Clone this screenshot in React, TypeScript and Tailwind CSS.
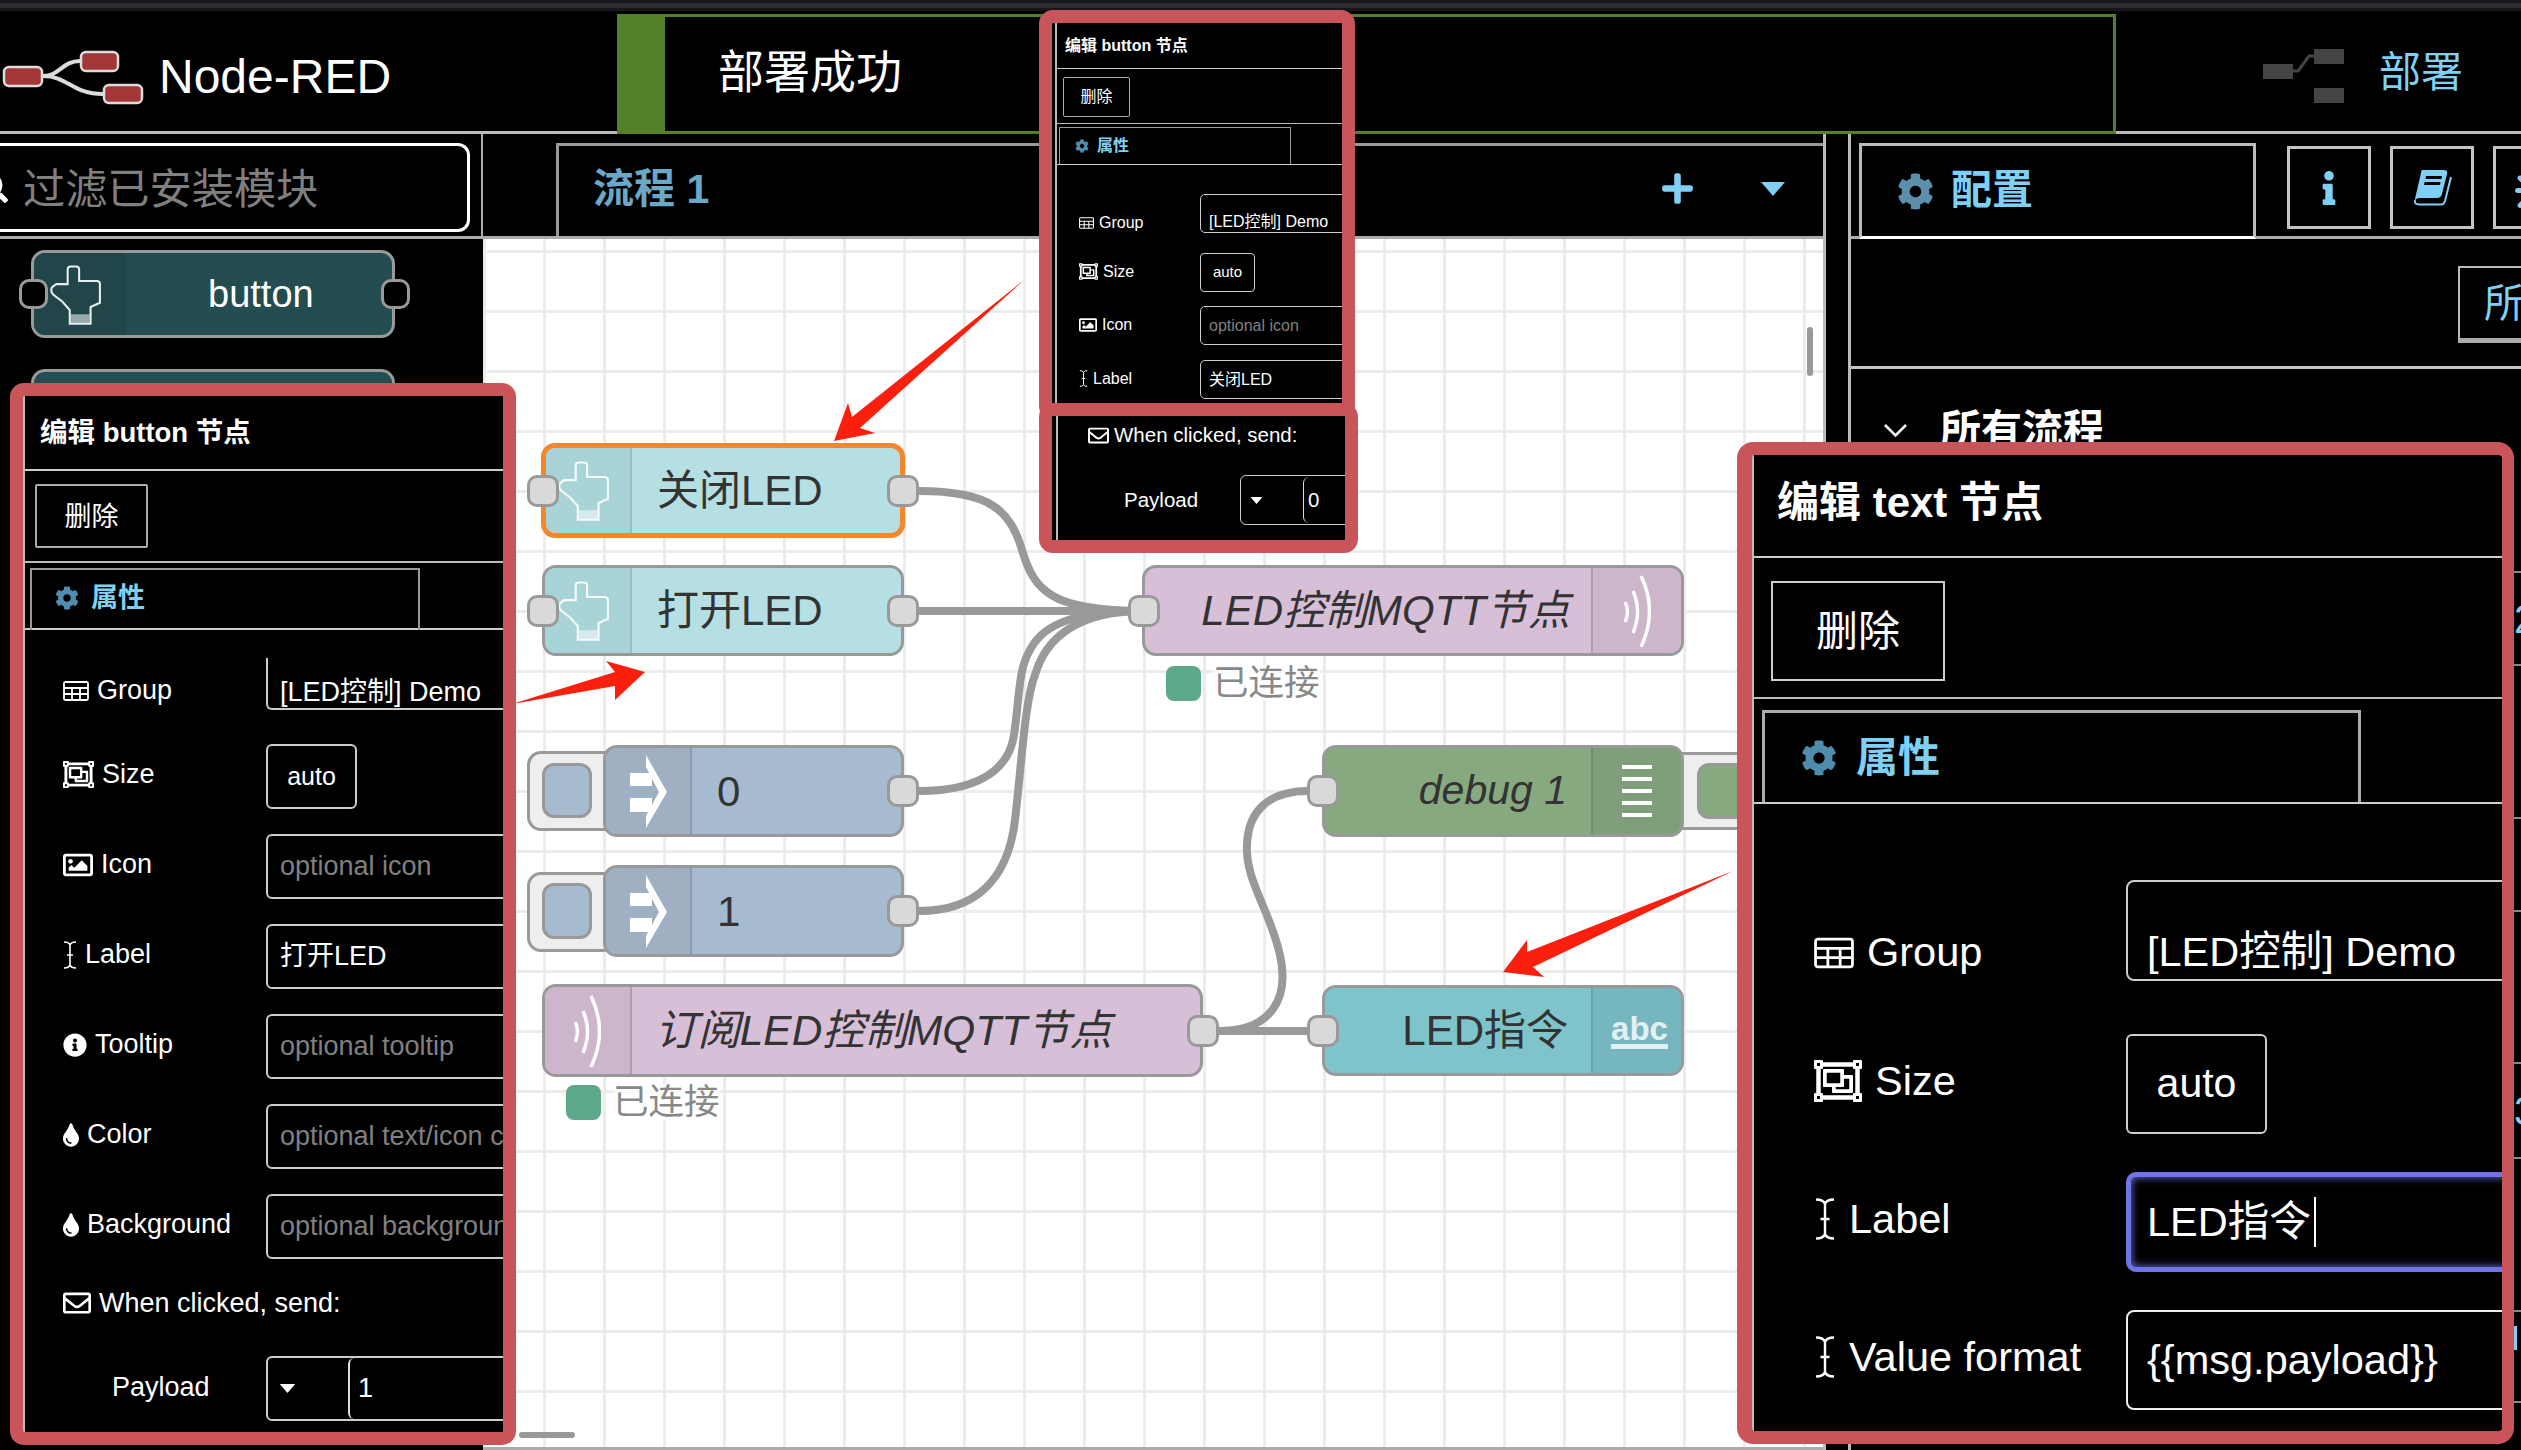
import type { ReactNode } from "react";
import {
  FaBug,
  FaCog,
  FaInfo,
  FaInfoCircle,
  FaPlus,
  FaRegEnvelope,
  FaRegImage,
  FaRegObjectGroup,
  FaSearch,
  FaTint,
} from "react-icons/fa";

function Port({ className }: { className: string }) {
  return (
    <div
      className={
        "absolute top-1/2 size-8 -translate-y-1/2 rounded-[10px] border-[3px] border-[#999] bg-[#d9d9d9] " + className
      }
    />
  );
}

function HandIcon() {
  return (
    <svg viewBox="31 21 50 58" className="-ml-[8px] h-[61px] w-[52px]" fill="none" stroke="#fff" strokeWidth="2" opacity="0.9">
      <path d="M48 26 Q48 23 51 23 H56 Q59 23 59 26 V37 H76 Q79 37 79 40 V58 L70 62 V78 H50 V65 L43 57 L34 50 Q31 46 33 43 L37 40 H48Z" />
      <path d="M51 69 H69 V77 H51Z" fill="#fff" opacity="0.6" stroke="none" />
    </svg>
  );
}

function InjectIcon() {
  return (
    <svg viewBox="0 0 37 73" className="h-[73px] w-[37px]" fill="#fff">
      <rect x="0" y="18" width="22" height="13" />
      <rect x="0" y="43" width="22" height="14" />
      <path d="M16 0 L37 37 L16 73 V61 L29 37 L16 12Z" />
    </svg>
  );
}

function WaveIcon() {
  return (
    <svg viewBox="0 0 27 72" className="h-[72px] w-[27px]" fill="none" stroke="#fff" strokeWidth="3.5">
      <path d="M1 27 Q6 36 1 47" />
      <path d="M9 16 Q18 36 9 58" />
      <path d="M17 1 Q34 36 17 72" />
    </svg>
  );
}

function TableIcon({ className }: { className: string }) {
  return (
    <svg viewBox="0 0 26 20" className={className} fill="none" stroke="currentColor" strokeWidth="1.8">
      <rect x="1" y="1" width="24" height="18" rx="1.5" />
      <path d="M1 7 H25 M1 13 H25 M9 7 V19 M17 7 V19" />
    </svg>
  );
}

function CursorIcon({ className }: { className: string }) {
  return (
    <svg viewBox="0 0 14 28" className={className} fill="none" stroke="currentColor" strokeWidth="1.6">
      <path d="M1 1 Q6 1 7 4 Q8 1 13 1 M7 4 V24 M1 27 Q6 27 7 24 Q8 27 13 27 M4 14 H10" />
    </svg>
  );
}

function Triangle({ className }: { className: string }) {
  return (
    <svg viewBox="0 0 24 14" className={className} fill="currentColor">
      <path d="M0 0 H24 L12 14Z" />
    </svg>
  );
}

function BookIcon() {
  return (
    <svg viewBox="0 0 39 37" className="h-[37px] w-[39px]" fill="#7fd0f5">
      <path d="M9 1 H31 Q35 1 34 5 L29 25 Q28 29 24 29 H7 Q3 29 1.5 32 L8 4 Q8.5 1 9 1Z" />
      <path d="M2 31 Q1 35.5 6 35.5 H28 Q31 35.5 32 32 L38 8" fill="none" stroke="#7fd0f5" strokeWidth="2" />
      <path d="M13 7 H29 L28.5 10 H12.5Z M11.5 13 H27.5 L27 16 H11Z" fill="#000" />
    </svg>
  );
}

function FlowNode({
  box,
  body,
  section,
  text,
  icon,
  label,
  iconRight,
  ports,
}: {
  box: string;
  body: string;
  section: string;
  text: string;
  icon: ReactNode;
  label: ReactNode;
  iconRight?: boolean;
  ports: ReactNode;
}) {
  const iconPart = <div className={"flex shrink-0 items-center justify-center " + section}>{icon}</div>;
  return (
    <div className={"absolute " + box}>
      <div className={"flex h-full overflow-hidden rounded-[14px] " + body}>
        {!iconRight && iconPart}
        <div className={"flex min-w-0 flex-1 items-center whitespace-nowrap text-[#333] " + text}>{label}</div>
        {iconRight && iconPart}
      </div>
      {ports}
    </div>
  );
}

function Status({ className }: { className: string }) {
  return (
    <div className={"absolute flex items-center gap-[12px] " + className}>
      <div className="size-[35px] rounded-[8px] bg-[#5ba88a]" />
      <span className="bg-white/70 text-[35.5px] leading-[36px] text-[#888]">已连接</span>
    </div>
  );
}

function InjectButton({ className, inner }: { className: string; inner: string }) {
  return (
    <div className={"absolute rounded-[14px] border-[3px] border-[#999] bg-[#eee] " + className}>
      <div className={"absolute rounded-[12px] border-[3px] border-[#999] " + inner} />
    </div>
  );
}

function Canvas() {
  return (
    <div className="relative h-[1208px] overflow-hidden bg-white bg-[linear-gradient(#ececec_3px,transparent_3px),linear-gradient(90deg,#ececec_3px,transparent_3px)] bg-[size:60px_60px] bg-[position:0_11px]">
      <svg viewBox="483 239 1340 1208" className="absolute inset-0 h-[1208px] w-[1340px]" fill="none" stroke="#999" strokeWidth="8">
        <path d="M919 491 C990 491 1010 510 1022 550 C1034 590 1050 611 1143 611" />
        <path d="M919 611 H1143" />
        <path d="M919 791 C970 791 1008 775 1014 735 C1020 695 1018 670 1030 650 C1045 620 1085 611 1143 611" />
        <path d="M919 911 C975 911 1008 880 1015 820 C1022 760 1025 700 1035 675 C1045 640 1075 611 1143 611" />
        <path d="M1219 1031 C1270 1031 1290 1000 1280 955 C1270 910 1245 880 1247 845 C1248 810 1270 791 1308 791" />
        <path d="M1219 1031 H1308" />
      </svg>

      <FlowNode
        box="left-[58px] top-[204px] h-[95px] w-[364px]"
        body="border-[5px] border-[#f5862e] bg-[#b5dfe2]"
        section="w-[86px] border-r-2 border-[#98bfc3] bg-[#a8d3d7]"
        text="pl-[25px] text-[42px]"
        icon={<HandIcon />}
        label="关闭LED"
        ports={
          <>
            <Port className="-left-[14px]" />
            <Port className="-right-[14px]" />
          </>
        }
      />
      <FlowNode
        box="left-[59px] top-[326px] h-[91px] w-[362px]"
        body="border-[3px] border-[#999] bg-[#b5dfe2]"
        section="w-[87px] border-r-2 border-[#98bfc3] bg-[#a8d3d7]"
        text="pl-[25px] text-[42px]"
        icon={<HandIcon />}
        label="打开LED"
        ports={
          <>
            <Port className="-left-[15px]" />
            <Port className="-right-[15px]" />
          </>
        }
      />

      <InjectButton className="left-[44px] top-[512px] h-[80px] w-[90px]" inner="left-[12px] top-[9px] h-[55px] w-[50px] bg-[#a6bbcf]" />
      <FlowNode
        box="left-[120px] top-[506px] h-[92px] w-[301px]"
        body="border-[3px] border-[#999] bg-[#a6bbcf]"
        section="w-[86px] border-r-2 border-[#8a9cae] bg-[#9eb0c2]"
        text="pl-[25px] text-[42px]"
        icon={<InjectIcon />}
        label="0"
        ports={<Port className="-right-[15px]" />}
      />
      <InjectButton className="left-[44px] top-[633px] h-[80px] w-[90px]" inner="left-[12px] top-[8px] h-[56px] w-[50px] bg-[#a6bbcf]" />
      <FlowNode
        box="left-[120px] top-[626px] h-[92px] w-[301px]"
        body="border-[3px] border-[#999] bg-[#a6bbcf]"
        section="w-[86px] border-r-2 border-[#8a9cae] bg-[#9eb0c2]"
        text="pl-[25px] text-[42px]"
        icon={<InjectIcon />}
        label="1"
        ports={<Port className="-right-[15px]" />}
      />

      <FlowNode
        box="left-[59px] top-[745px] h-[93px] w-[661px]"
        body="border-[3px] border-[#999] bg-[#d8bfd8]"
        section="w-[87px] border-r-2 border-[#b09cb0] bg-[#cdb5cc]"
        text="pl-[23px] text-[42.4px] italic"
        icon={<WaveIcon />}
        label="订阅LED控制MQTT节点"
        ports={<Port className="-right-[16px]" />}
      />
      <Status className="left-[83px] top-[845px]" />

      <FlowNode
        box="left-[659px] top-[326px] h-[91px] w-[542px]"
        body="border-[3px] border-[#999] bg-[#d8bfd8]"
        section="w-[90px] border-l-2 border-[#b09cb0] bg-[#cdb5cc]"
        text="justify-end pr-[21px] text-[42px] italic"
        icon={<WaveIcon />}
        iconRight
        label="LED控制MQTT节点"
        ports={<Port className="-left-[14px]" />}
      />
      <Status className="left-[683px] top-[426px]" />

      <div className="absolute left-[1190px] top-[513px] h-[78px] w-[90px] rounded-r-[14px] border-[3px] border-[#999] bg-[#eee]">
        <div className="absolute left-[21px] top-[8px] h-[56px] w-[60px] rounded-[12px] border-[3px] border-[#999] bg-[#87a980]" />
      </div>
      <FlowNode
        box="left-[839px] top-[506px] h-[92px] w-[362px]"
        body="border-[3px] border-[#999] bg-[#87a980]"
        section="w-[90px] border-l-2 border-[#6f8f6a] bg-[#7f9f7a]"
        text="justify-end pr-[24px] text-[41px] italic"
        icon={
          <div className="flex w-[30px] flex-col gap-[8px]">
            <div className="h-[4px] bg-white" />
            <div className="h-[4px] bg-white" />
            <div className="h-[4px] bg-white" />
            <div className="h-[4px] bg-white" />
            <div className="h-[4px] bg-white" />
          </div>
        }
        iconRight
        label="debug 1"
        ports={<Port className="-left-[15px]" />}
      />
      <FlowNode
        box="left-[839px] top-[746px] h-[91px] w-[362px]"
        body="border-[3px] border-[#999] bg-[#7fc4cb]"
        section="w-[90px] border-l-2 border-[#66a3aa] bg-[#76b7bf]"
        text="justify-end pr-[23px] text-[42px]"
        icon={
          <span className="ml-[5px] mt-[2px] border-b-[5px] border-white text-[33px] font-bold leading-[30px] text-white opacity-80">abc</span>
        }
        iconRight
        label="LED指令"
        ports={<Port className="-left-[15px]" />}
      />

      <svg viewBox="483 239 1340 1208" className="absolute inset-0 h-[1208px] w-[1340px]" fill="#fb1f0e">
        <path d="M1024 280 L852 417 L848 403 L834 441 L875 433 L860 428Z" />
        <path d="M512 704 L615 672 L606 661 L645 672 L615 700 L615 686Z" />
        <path d="M1733 871 L1527 952 L1527 940 L1503 972 L1544 977 L1533 967Z" />
      </svg>

      <div className="absolute bottom-[9px] left-[36px] h-[6px] w-[56px] rounded-full bg-[#999]" />
      <div className="absolute right-[10px] top-[88px] h-[49px] w-[6px] rounded-full bg-[#999]" />
    </div>
  );
}

function LeftRow({
  icon,
  label,
  className,
  labelClass = "pb-[4px]",
  children,
}: {
  icon: ReactNode;
  label: string;
  className: string;
  labelClass?: string;
  children: ReactNode;
}) {
  return (
    <div className={"ml-[38px] flex " + className}>
      <div className={"flex w-[203px] shrink-0 items-center gap-[8px] text-[27px] text-white " + labelClass}>
        {icon}
        <span>{label}</span>
      </div>
      <div className="h-full w-[320px] shrink-0">{children}</div>
    </div>
  );
}

function LeftPanel() {
  const input = "flex h-full items-center rounded-[6px] border-2 border-[#ccc] pl-[12px] text-[27px] whitespace-nowrap";
  return (
    <div className="absolute left-[10px] top-[383px] h-[1062px] w-[506px] overflow-hidden rounded-[14px] border-[13px] border-[#c9555a] bg-black">
      <div className="h-full overflow-hidden border-l-2 border-[#bbb] text-white">
        <div className="flex h-[75px] items-center border-b-2 border-[#ccc] pl-[15px] text-[27.5px] font-bold">编辑 button 节点</div>
        <div className="h-[92px] border-b-2 border-[#bbb] pl-[10px] pt-[13px]">
          <div className="flex h-[64px] w-[113px] items-center justify-center rounded-[2px] border-2 border-[#aaa] pt-[2px] text-[27px]">删除</div>
        </div>
        <div className="h-[67px] border-b-2 border-[#ccc] pl-[5px] pt-[5px]">
          <div className="flex h-[62px] w-[390px] items-center gap-[12px] border-x-2 border-t-2 border-[#999] pb-[4px] pl-[23px] text-[27px] font-bold text-[#7fd0f5]">
            <FaCog size={24} color="#4f8cad" />
            属性
          </div>
        </div>

        <LeftRow icon={<TableIcon className="h-[20px] w-[26px]" />} label="Group" className="mt-[28px] h-[52px]" labelClass="pt-[13px]">
          <div className="flex h-full items-end rounded-bl-[6px] border-b-2 border-l-2 border-[#ccc] pl-[12px] text-[27px] leading-[32px] whitespace-nowrap">[LED控制] Demo</div>
        </LeftRow>
        <LeftRow icon={<FaRegObjectGroup size={31} />} label="Size" className="mt-[34px] h-[65px]">
          <div className="flex h-full w-[91px] items-center justify-center rounded-[6px] border-2 border-[#ccc] text-[25px]">auto</div>
        </LeftRow>
        <LeftRow icon={<FaRegImage size={30} />} label="Icon" className="mt-[25px] h-[65px]">
          <div className={input + " text-[#808080]"}>optional icon</div>
        </LeftRow>
        <LeftRow icon={<CursorIcon className="h-[28px] w-[14px]" />} label="Label" className="mt-[25px] h-[65px]">
          <div className={input}>打开LED</div>
        </LeftRow>
        <LeftRow icon={<FaInfoCircle size={24} />} label="Tooltip" className="mt-[25px] h-[65px]">
          <div className={input + " text-[#808080]"}>optional tooltip</div>
        </LeftRow>
        <LeftRow icon={<FaTint size={24} className="w-[16px]" />} label="Color" className="mt-[25px] h-[65px]">
          <div className={input + " text-[#808080]"}>optional text/icon color</div>
        </LeftRow>
        <LeftRow icon={<FaTint size={24} className="w-[16px]" />} label="Background" className="mt-[25px] h-[65px]">
          <div className={input + " text-[#808080]"}>optional background color</div>
        </LeftRow>

        <div className="ml-[38px] mt-[28px] flex h-[32px] items-center gap-[8px] text-[27px]">
          <FaRegEnvelope size={28} />
          When clicked, send:
        </div>
        <div className="ml-[38px] mt-[37px] flex h-[65px]">
          <div className="flex w-[203px] shrink-0 items-center pb-[2px] pl-[49px] text-[27px]">Payload</div>
          <div className="flex h-full w-[320px] shrink-0 items-center rounded-l-[6px] border-2 border-[#ccc]">
            <div className="w-[80px] shrink-0 pl-[11px]">
              <Triangle className="h-[9px] w-[17px]" />
            </div>
            <div className="flex h-full flex-1 items-center rounded-l-[6px] border-l-2 border-[#ddd] pl-[8px] text-[27px]">1</div>
          </div>
        </div>
      </div>
    </div>
  );
}

function TopPanel() {
  const input = "flex h-full items-center rounded-[5px] border border-[#ccc] pl-[8px] text-[16px] whitespace-nowrap";
  const labelCell = "flex w-[121px] shrink-0 items-center gap-[5px] pb-[2px] text-[16px]";
  return (
    <>
      <div className="absolute left-[1039px] top-[10px] h-[410px] w-[316px] overflow-hidden rounded-[14px] border-[13px] border-[#c9555a] bg-black">
        <div className="ml-[3px] h-full overflow-hidden border-l-2 border-[#bbb] text-white">
          <div className="flex h-[46px] items-center border-b border-[#ccc] pl-[8px] text-[16px] font-bold">编辑 button 节点</div>
          <div className="h-[55px] border-b border-[#bbb] pl-[6px] pt-[8px]">
            <div className="flex h-[40px] w-[67px] items-center justify-center rounded-[2px] border border-[#aaa] text-[16px]">删除</div>
          </div>
          <div className="h-[41px] border-b border-[#ccc] pl-[2px] pt-[3px]">
            <div className="flex h-[37px] w-[232px] items-center gap-[8px] border-x border-t border-[#999] pl-[15px] text-[16px] font-bold text-[#7fd0f5]">
              <FaCog size={14} color="#4f8cad" />
              属性
            </div>
          </div>
          <div className="ml-[22px] mt-[29px] flex h-[39px]">
            <div className={labelCell + " pt-[20px]"}>
              <TableIcon className="h-[12px] w-[15px]" />
              Group
            </div>
            <div className="h-full w-[200px] shrink-0">
              <div className="flex h-full items-end rounded-[5px] border border-[#ccc] pl-[8px] text-[16px] leading-[20px] whitespace-nowrap">[LED控制] Demo</div>
            </div>
          </div>
          <div className="ml-[22px] mt-[20px] flex h-[39px]">
            <div className={labelCell}>
              <FaRegObjectGroup size={19} />
              Size
            </div>
            <div className="flex h-full w-[55px] items-center justify-center rounded-[4px] border border-[#ccc] text-[15px]">auto</div>
          </div>
          <div className="ml-[22px] mt-[14px] flex h-[39px]">
            <div className={labelCell}>
              <FaRegImage size={18} />
              Icon
            </div>
            <div className="h-full w-[200px] shrink-0">
              <div className={input + " text-[#808080]"}>optional icon</div>
            </div>
          </div>
          <div className="ml-[22px] mt-[15px] flex h-[39px]">
            <div className={labelCell}>
              <CursorIcon className="h-[17px] w-[9px]" />
              Label
            </div>
            <div className="h-full w-[200px] shrink-0">
              <div className={input}>关闭LED</div>
            </div>
          </div>
        </div>
      </div>

      <div className="absolute left-[1039px] top-[403px] h-[150px] w-[319px] overflow-hidden rounded-[14px] border-[13px] border-[#c9555a] bg-black">
        <div className="ml-[4px] h-full overflow-hidden border-l-2 border-[#bbb] text-[20.5px] text-white">
          <div className="ml-[30px] mt-[5px] flex h-[28px] items-center gap-[5px]">
            <FaRegEnvelope size={21} />
            When clicked, send:
          </div>
          <div className="mt-[26px] flex h-[50px] items-center pl-[66px]">
            <div className="w-[116px] shrink-0">Payload</div>
            <div className="flex h-full w-[200px] shrink-0 items-center rounded-l-[6px] border border-[#ccc]">
              <div className="w-[62px] shrink-0 pl-[9px]">
                <Triangle className="h-[7px] w-[13px]" />
              </div>
              <div className="flex h-[46px] flex-1 items-center rounded-l-[6px] border-l border-[#ddd] pl-[4px]">0</div>
            </div>
          </div>
        </div>
      </div>
    </>
  );
}

function RightRow({
  icon,
  label,
  className,
  labelClass = "pb-[6px]",
  children,
}: {
  icon: ReactNode;
  label: string;
  className: string;
  labelClass?: string;
  children: ReactNode;
}) {
  return (
    <div className={"ml-[60px] flex " + className}>
      <div className={"flex w-[312px] shrink-0 items-center gap-[13px] text-[41.5px] whitespace-nowrap " + labelClass}>
        {icon}
        {label}
      </div>
      <div className="h-full w-[400px] shrink-0">{children}</div>
    </div>
  );
}

function RightPanel() {
  return (
    <div className="absolute left-[1737px] top-[442px] h-[1002px] w-[777px] overflow-hidden rounded-[16px] border-y-[13px] border-l-[15px] border-r-[12px] border-[#c9555a] bg-black">
      <div className="h-full overflow-hidden border-l-2 border-[#bbb] text-white">
        <div className="flex h-[103px] items-center border-b-2 border-[#ccc] pb-[6px] pl-[23px] text-[42px] font-bold">编辑 text 节点</div>
        <div className="h-[141px] border-b-2 border-[#bbb] pl-[17px] pt-[23px]">
          <div className="flex h-[100px] w-[174px] items-center justify-center border-2 border-[#ccc] text-[42px]">删除</div>
        </div>
        <div className="h-[105px] border-b-2 border-[#ccc] pl-[8px] pt-[11px]">
          <div className="flex h-[92px] w-[599px] items-center gap-[19px] border-x-[3px] border-t-[3px] border-[#aaa] pl-[36px] text-[42px] font-bold text-[#7fd0f5]">
            <FaCog size={36} color="#4f8cad" />
            属性
          </div>
        </div>

        <RightRow icon={<TableIcon className="h-[32px] w-[40px]" />} label="Group" className="mt-[76px] h-[101px]" labelClass="pt-[44px]">
          <div className="flex h-full items-end rounded-[8px] border-2 border-[#ccc] pb-[3px] pl-[19px] text-[41.5px] leading-[48px] whitespace-nowrap">[LED控制] Demo</div>
        </RightRow>
        <RightRow icon={<FaRegObjectGroup size={48} />} label="Size" className="mt-[53px] h-[100px]">
          <div className="flex h-full w-[141px] items-center justify-center rounded-[6px] border-2 border-[#ccc] text-[41px]">auto</div>
        </RightRow>
        <RightRow icon={<CursorIcon className="h-[42px] w-[22px]" />} label="Label" className="mt-[38px] h-[100px]">
          <div className="flex h-full items-center rounded-[10px] border-[5px] border-[#6f74e8] pl-[16px] text-[41.5px] shadow-[inset_0_0_8px_#6f74e8] whitespace-nowrap">
            LED指令
            <span className="ml-[3px] h-[50px] w-[2px] bg-white" />
          </div>
        </RightRow>
        <RightRow icon={<CursorIcon className="h-[42px] w-[22px]" />} label="Value format" className="mt-[38px] h-[100px]">
          <div className="flex h-full items-center rounded-[8px] border-2 border-[#eee] pl-[19px] text-[41.5px] whitespace-nowrap">{"{{msg.payload}}"}</div>
        </RightRow>
      </div>
    </div>
  );
}

function Sidebar() {
  const iconTab = "flex h-[83px] w-[84px] shrink-0 items-center justify-center border-[3px] border-[#c4c4c4] text-[#7fd0f5]";
  return (
    <div className="w-[673px] shrink-0 overflow-hidden border-l-[3px] border-[#bbb]">
      <div className="flex h-[105px] border-b-[3px] border-[#aaa] pl-[8px] pt-[9px]">
        <div className="flex h-[96px] w-[397px] shrink-0 items-center gap-[17px] border-x-[3px] border-t-[3px] border-b-[3px] border-[#bbb] border-b-white pl-[35px] text-[41px] font-bold text-[#7fd0f5]">
          <FaCog size={37} color="#5b8fab" />
          配置
        </div>
        <div className="ml-[31px] mt-[3px] flex gap-[19px]">
          <div className={iconTab}>
            <FaInfo size={34} />
          </div>
          <div className={iconTab}>
            <BookIcon />
          </div>
          <div className={iconTab}>
            <FaBug size={40} />
          </div>
        </div>
      </div>
      <div className="h-[130px] border-b-[3px] border-[#c4c4c4] pl-[607px] pt-[27px]">
        <div className="flex h-[77px] w-[120px] items-center border-2 border-b-[5px] border-[#bbb] border-b-[#aaa] pl-[24px] text-[40px] whitespace-nowrap text-[#7fd0f5]">
          所有
        </div>
      </div>
      <div className="h-[204px] border-b-2 border-[#888] pl-[33px] pt-[31px]">
        <div className="flex items-center text-[41px] font-bold text-white">
          <svg viewBox="0 0 23 13" className="mr-[33px] h-[13px] w-[23px]" fill="none" stroke="#fff" strokeWidth="2.5">
            <path d="M1 1 L11.5 11.5 L22 1" />
          </svg>
          所有流程
        </div>
      </div>
      <div className="flex h-[93px] items-center border-b-2 border-[#888] pl-[663px] text-[40px] leading-[40px] text-[#7fd0f5]">2</div>
      <div className="h-[153px] border-b-2 border-[#888]" />
      <div className="h-[93px] border-b-2 border-[#888]" />
      <div className="h-[152px] border-b-2 border-[#888]" />
      <div className="flex h-[95px] items-center border-b-2 border-[#888] pl-[663px] text-[40px] leading-[40px] text-[#7fd0f5]">3</div>
      <div className="h-[153px] border-b-2 border-[#888]" />
      <div className="h-[91px] border-b-2 border-[#888] pl-[663px] pt-[14px]">
        <div className="h-[24px] w-[3px] bg-[#7fd0f5]" />
      </div>
    </div>
  );
}

export default function App() {
  return (
    <div className="relative h-[1450px] w-[2521px] overflow-hidden bg-black font-['Liberation_Sans','Noto_Sans_CJK_SC',sans-serif]">
      <div className="h-[14px]">
        <div className="h-[3px] bg-[#17171b]" />
        <div className="h-[5px] bg-[#2c2c32]" />
        <div className="h-[3px] bg-[#17171b]" />
      </div>

      <header className="flex h-[120px]">
        <div className="flex h-full w-[617px] shrink-0 items-center border-b-[3px] border-[#bbb] pt-[8px]">
          <svg viewBox="0 48 146 60" className="h-[60px] w-[146px] shrink-0">
            <path d="M43 77 C60 77 62 62 80 62 M43 77 C68 77 72 95 103 95" fill="none" stroke="#ddd" strokeWidth="4" />
            <rect x="4" y="68" width="38" height="19" rx="5" fill="#a33636" stroke="#ddd" strokeWidth="2.5" />
            <rect x="81" y="53" width="37" height="19" rx="5" fill="#a33636" stroke="#ddd" strokeWidth="2.5" />
            <rect x="104" y="86" width="38" height="18" rx="5" fill="#a33636" stroke="#ddd" strokeWidth="2.5" />
          </svg>
          <span className="ml-[13px] text-[48px] leading-none text-white">Node-RED</span>
        </div>
        <div className="flex h-full w-[1499px] shrink-0 items-center border-[3px] border-l-[48px] border-[#54802a] pb-[4px] pl-[53px] text-[46px] text-white">
          部署成功
        </div>
        <div className="flex h-full flex-1 items-center border-b-[3px] border-[#bbb] pl-[147px]">
          <svg viewBox="2263 48 81 54" className="mt-[6px] h-[54px] w-[81px] shrink-0">
            <path d="M2293 70 H2298 L2309 55 H2314" fill="none" stroke="#444" strokeWidth="3" />
            <rect x="2263" y="63" width="30" height="15" fill="#444" />
            <rect x="2314" y="48" width="30" height="15" fill="#444" />
            <rect x="2314" y="87" width="30" height="15" fill="#444" />
          </svg>
          <span className="ml-[35px] text-[42px] text-[#7fd0f5]">部署</span>
        </div>
      </header>

      <div className="flex h-[1316px]">
        <div className="w-[483px] shrink-0">
          <div className="h-[105px] border-b-[3px] border-r-2 border-[#aaa] pt-[9px]">
            <div className="-ml-[3px] flex h-[89px] w-[473px] items-center overflow-hidden rounded-r-[12px] border-[3px] border-white">
              <FaSearch size={30} className="-ml-[22px] shrink-0 text-white" />
              <span className="ml-[15px] pt-[5px] text-[42.2px] text-[#808080]">过滤已安装模块</span>
            </div>
          </div>
          <div className="ml-[31px] mt-[11px] w-[364px]">
            <div className="relative h-[88px]">
              <div className="flex h-full overflow-hidden rounded-[14px] border-[3px] border-[#999] bg-[#234d50]">
                <div className="flex w-[92px] shrink-0 items-center justify-center bg-[#21464a]">
                  <HandIcon />
                </div>
                <div className="pl-[82px] text-[38px] leading-[82px] text-white">button</div>
              </div>
              <div className="absolute -left-[12px] top-1/2 h-[30px] w-[29px] -translate-y-1/2 rounded-[10px] border-[3px] border-[#999] bg-black" />
              <div className="absolute -right-[15px] top-1/2 h-[30px] w-[29px] -translate-y-1/2 rounded-[10px] border-[3px] border-[#999] bg-black" />
            </div>
            <div className="mt-[31px] h-[88px] rounded-[14px] border-[3px] border-[#999] bg-[#234d50]" />
          </div>
        </div>

        <div className="w-[1340px] shrink-0">
          <div className="h-[105px] border-b-[3px] border-[#aaa] pl-[73px] pt-[9px]">
            <div className="flex h-[93px] items-center border-l-[3px] border-t-[3px] border-[#999] pl-[34px]">
              <span className="-mt-[2px] text-[41px] font-bold text-[#6ba7c6]">流程 1</span>
              <FaPlus size={35} className="-mt-[5px] ml-[951px] text-[#7fd0f5]" />
              <Triangle className="-mt-[5px] ml-[66px] h-[14px] w-[24px] text-[#7fd0f5]" />
            </div>
          </div>
          <Canvas />
          <div className="h-[3px] bg-[#aaa]" />
        </div>

        <div className="w-[25px] shrink-0 border-l-[3px] border-[#bbb]" />
        <Sidebar />
      </div>

      <LeftPanel />
      <TopPanel />
      <RightPanel />
    </div>
  );
}
